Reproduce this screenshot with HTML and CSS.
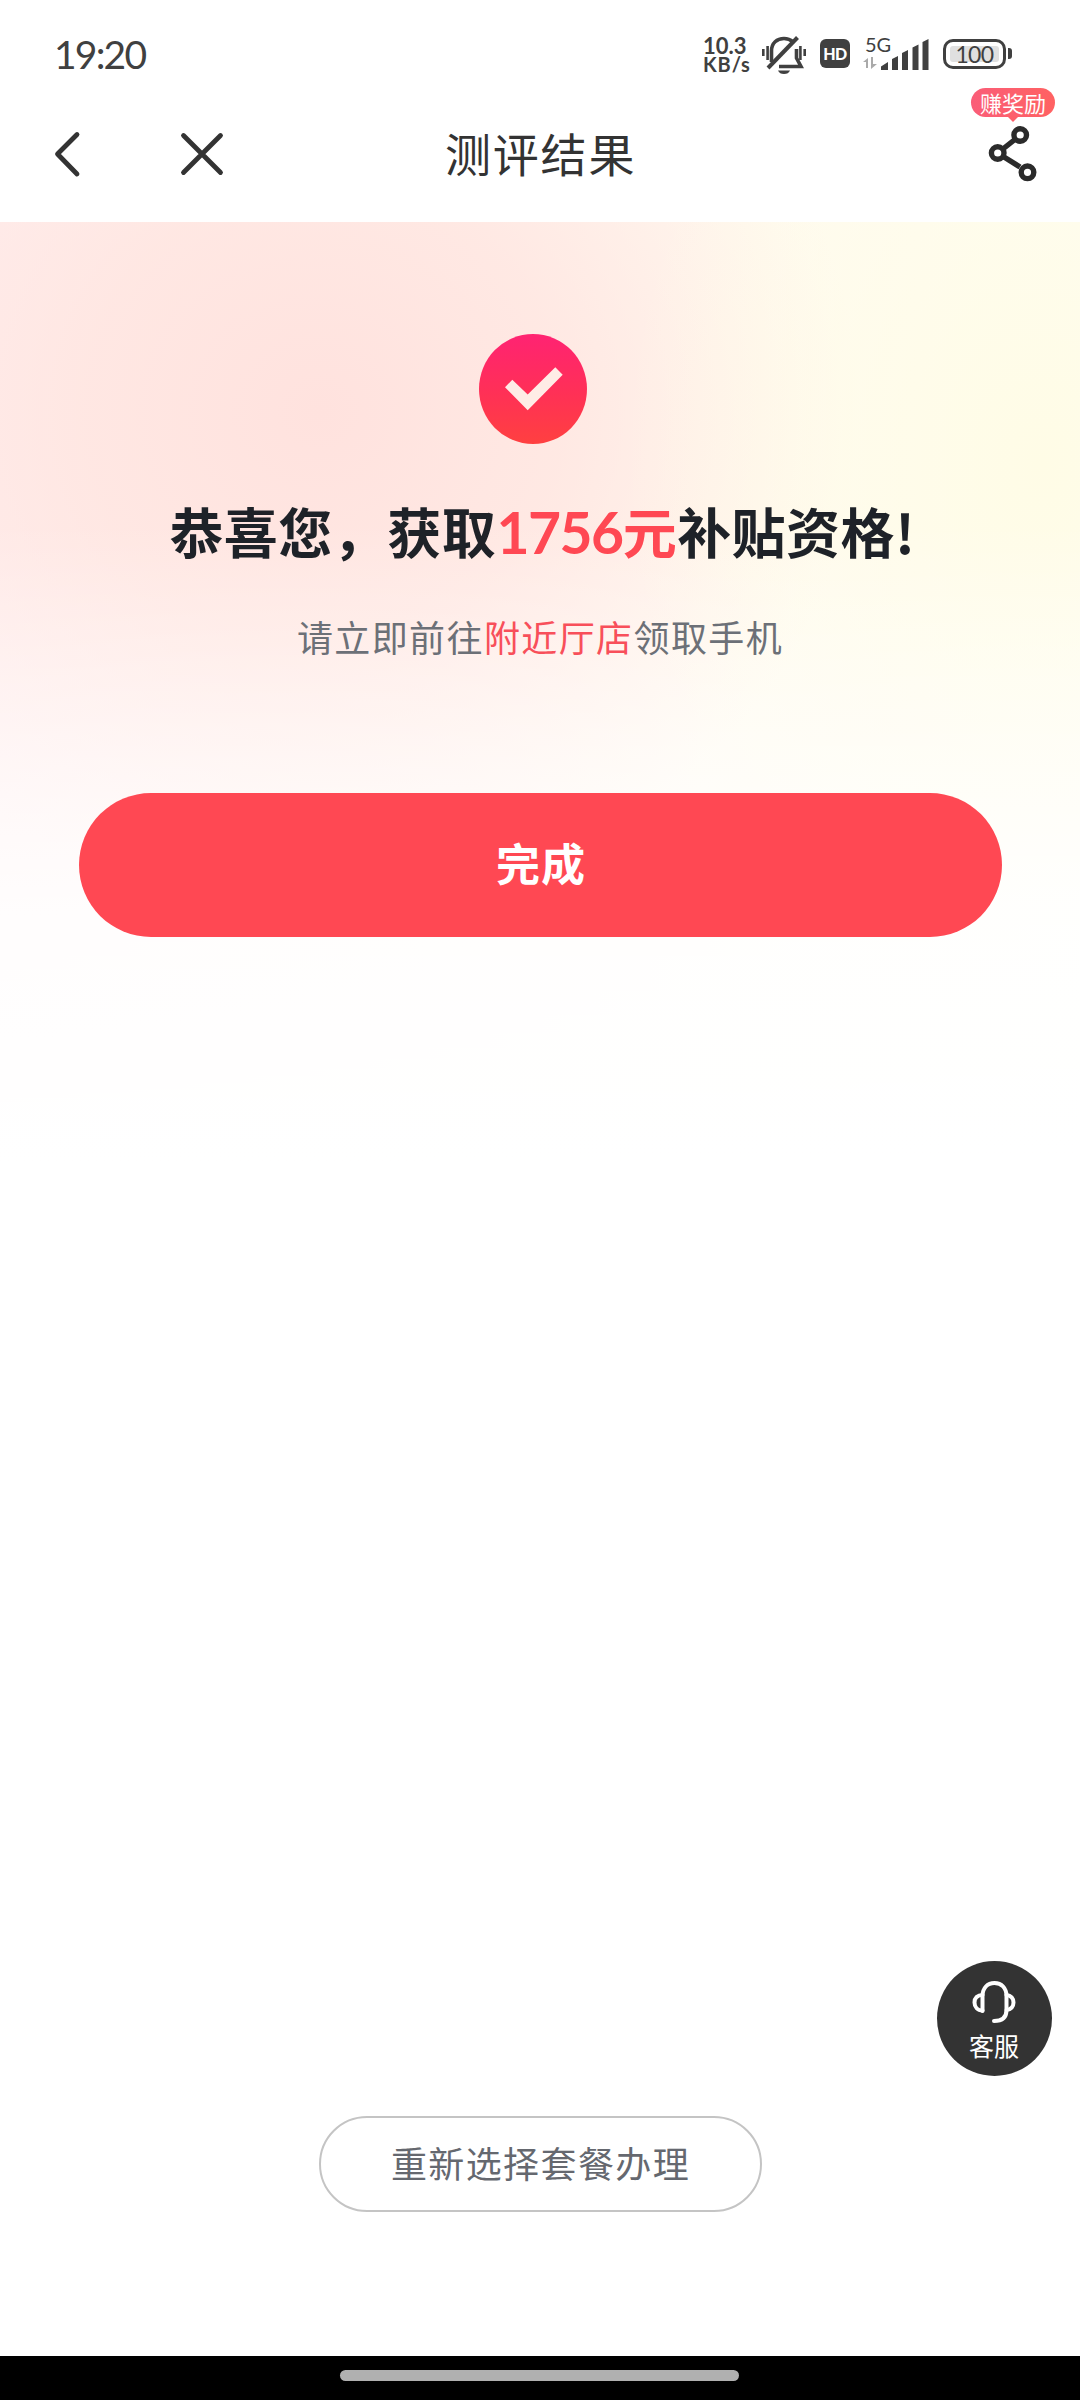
FILE: index.html
```html
<!DOCTYPE html>
<html lang="zh-CN">
<head>
<meta charset="utf-8">
<title>测评结果</title>
<link rel="stylesheet" href="styles.css">
</head>
<body>
<div class="screen">
  <header class="status-bar">
    <span class="clock">19:20</span>
    <div class="status-icons">
      <div class="net-speed"><span class="net-value">10.3</span><span class="net-unit">KB/s</span></div>
      <svg class="bell" width="46" height="40" viewBox="0 0 46 40" fill="none" stroke="#404040" stroke-width="3.6">
        <path d="M10.5 27V16C10.500 8 16 3.500 23 3.500C26.500 3.500 29.500 4.600 31.600 6.600M35.500 14V23L40 31.500H18"/>
        <path d="M7 33L36.500 2.500" stroke-width="4"/>
        <path d="M17 35.500H29C28 38 26 39 23 39S18 38 17 35.500Z" fill="#404040" stroke="none"/>
        <path d="M2.300 14V21M6.600 11V25M39.400 11V25M43.700 14V21" stroke-width="2.600"/>
      </svg>
      <span class="hd">HD</span>
      <div class="signal">
        <span class="gen">5G</span>
        <svg width="66" height="36" viewBox="0 0 66 36">
          <path d="M0 26L5 22V32H3V26ZM8 21H10V28H14L8 33Z" fill="#aaa"/>
          <path d="M18 34V30.500L25 26V34ZM29 34V23L35 20V34ZM39 34V17L45 14V34ZM49.500 34V11.500L55.500 8.500V34ZM59.500 34V6L65.500 3V34Z" fill="#404040"/>
        </svg>
      </div>
      <div class="battery"><span class="battery-level">100</span></div>
    </div>
  </header>

  <nav class="title-bar">
    <svg class="back" width="28" height="48" viewBox="0 0 28 48" fill="none" stroke="#333" stroke-width="4.800" stroke-linecap="round" stroke-linejoin="round"><path d="M23 4.500L3.500 24L23 44"/></svg>
    <svg class="close" width="44" height="44" viewBox="0 0 44 44" fill="none" stroke="#333" stroke-width="4.800" stroke-linecap="round"><path d="M3.500 3.500L40.500 40.500M40.500 3.500L3.500 40.500"/></svg>
    <h1 class="title">测评结果</h1>
    <div class="share">
      <svg width="50" height="58" viewBox="0 0 50 58" fill="none" stroke="#2b2b2b" stroke-width="5.400">
        <path d="M15.500 24.500L27.500 15M16 33L32 43"/>
        <circle cx="32.200" cy="11" r="6.300"/><circle cx="9.700" cy="29" r="6.300"/><circle cx="39.500" cy="48.300" r="6.300"/>
      </svg>
      <span class="badge">赚奖励</span>
    </div>
  </nav>

  <main class="result">
    <svg class="check" width="108" height="110" viewBox="0 0 108 110">
      <defs><linearGradient id="check-fill" x1="0" y1="0" x2="0" y2="1"><stop offset="0.05" stop-color="#ff2470"/><stop offset="0.5" stop-color="#ff2f58"/><stop offset="1" stop-color="#ff4040"/></linearGradient></defs>
      <ellipse cx="54" cy="55" rx="54" ry="55" fill="url(#check-fill)"/>
      <path d="M26 53.300L33.300 45.700L48.700 60.500L76.300 33.300L83.700 40.700L48.700 76.300Z" fill="#ffece6"/>
    </svg>
    <h2 class="headline">恭喜您，获取<em class="amount"><span class="digits">1756</span>元</em>补贴资格!</h2>
    <p class="hint">请立即前往<a class="stores">附近厅店</a>领取手机</p>
    <button class="done">完成</button>
    <button class="reselect">重新选择套餐办理</button>
  </main>

  <footer class="gesture-bar"><span class="gesture-pill"></span></footer>

  <button class="support">
    <svg width="44" height="44" viewBox="0 0 44 44" fill="none" stroke="#fff" stroke-width="4" stroke-linecap="round" stroke-linejoin="round">
      <path d="M10.500 31V16C10.500 8 15.500 3 22.500 3S34.500 8 34.500 16V30C34.500 37 30.500 41 22 41"/>
      <path d="M10.500 15C5.500 15 2.500 18 2.500 22.500S5.500 30.500 10.500 30.500M34.500 15C39 15.500 41.500 18.500 41.500 22.500S39 29.500 34.500 30"/>
    </svg>
    <span>客服</span>
  </button>
</div>
</body>
</html>
```
FILE: styles.css
```css
* { box-sizing: border-box; }

body {
  margin: 0;
  background: #fff;
  font-family: "Noto Sans CJK SC", sans-serif;
}

button {
  border: 0;
  padding: 0;
  font-family: inherit;
}

.screen {
  position: relative;
  display: flex;
  flex-direction: column;
  width: 1080px;
  height: 2400px;
}

/* Status bar */
.status-bar {
  display: flex;
  justify-content: space-between;
  height: 88px;
  padding: 34px 68px 0 54px;
  color: #404040;
  font-family: Lato, sans-serif;
}

.clock {
  font-size: 39px;
  letter-spacing: -1.8px;
  line-height: 40px;
}

.status-icons {
  display: flex;
  align-items: flex-start;
}

.net-speed {
  display: flex;
  flex-direction: column;
  width: 50px;
  margin: 2px 8px 0 0;
  font-size: 22px;
  font-weight: 700;
  line-height: 19px;
}

.net-unit {
  font-size: 20px;
  letter-spacing: 0.9px;
}

.bell { margin: 1px 13px 0 0; }

.hd {
  display: flex;
  align-items: center;
  justify-content: center;
  width: 30px;
  height: 29px;
  margin: 5px 13px 0 0;
  border-radius: 6px;
  background: #404040;
  color: #fff;
  font-size: 16px;
  font-weight: 900;
  letter-spacing: -0.5px;
}

.signal {
  position: relative;
  width: 66px;
  height: 36px;
  margin: 2px 14px 0 0;
}

.gen {
  position: absolute;
  top: -2px;
  left: 2px;
  font-size: 20px;
  line-height: 20px;
}

.battery {
  position: relative;
  width: 63px;
  height: 30px;
  margin: 5px 6px 0 0;
  padding: 4px;
  border: 3.5px solid #404040;
  border-radius: 10px;
}

.battery::after {
  content: "";
  position: absolute;
  top: 6px;
  right: -9px;
  width: 4px;
  height: 11px;
  border-radius: 0 3px 3px 0;
  background: #404040;
}

.battery-level {
  display: block;
  height: 16px;
  border-radius: 3px;
  background: #e0e0e0;
  font-size: 23px;
  letter-spacing: -0.6px;
  line-height: 16px;
  text-align: center;
}

/* Title bar */
.title-bar {
  display: grid;
  grid-template-columns: 28px 44px 1fr 50px;
  column-gap: 99px;
  align-items: start;
  height: 134px;
  padding: 36px 42px 0 54px;
}

.back { margin-top: 6px; }
.close { margin: 8px 0 0 -1px; }

.title {
  margin: 0;
  color: #333;
  font-size: 46px;
  font-weight: 400;
  letter-spacing: 1.8px;
  line-height: 56px;
  padding-left: 121px;
  white-space: nowrap;
}

.share {
  position: relative;
  width: 50px;
  height: 58px;
}

.badge {
  position: absolute;
  top: -36px;
  left: -17px;
  width: 84px;
  height: 29px;
  border-radius: 15px;
  background: linear-gradient(90deg, #fa5d78, #ff6262);
  color: #fff;
  font-size: 22px;
  line-height: 28px;
  text-align: center;
}

.badge::after {
  content: "";
  position: absolute;
  top: 28px;
  left: 36px;
  border: 6px solid transparent;
  border-top-color: #fd5f6a;
  border-bottom: 0;
}

/* Result */
.result {
  display: flex;
  flex: 1;
  flex-direction: column;
  align-items: center;
  padding: 112px 0 144px;
  background:
    linear-gradient(180deg, rgba(255, 255, 255, 0) 300px, rgba(255, 255, 255, 0.4) 480px, rgba(255, 255, 255, 0.88) 690px, #fff 940px),
    radial-gradient(ellipse 420px 560px at 1040px 240px, #fffce6, rgba(255, 252, 230, 0)),
    radial-gradient(ellipse 540px 500px at 320px 190px, #ffe2de, rgba(255, 229, 224, 0.8) 45%, rgba(255, 243, 235, 0)),
    linear-gradient(90deg, #ffeeee, #fff6f0 45%, #fffbf0 70%, #fffdf4);
}

.check { margin-left: -14px; }

.headline {
  margin: 47px 0 0;
  padding-left: 5px;
  color: #1e2228;
  font-size: 54px;
  font-weight: 700;
  letter-spacing: 0.5px;
  line-height: 80px;
  white-space: nowrap;
}

.amount {
  color: #ff4853;
  font-style: normal;
}

.digits {
  font-family: Lato, sans-serif;
  font-size: 57px;
  letter-spacing: -1.5px;
  line-height: 1;
}

.hint {
  margin: 40px 0 0;
  color: #6c7077;
  font-size: 36px;
  letter-spacing: 1.4px;
  line-height: 50px;
}

.stores { color: #f84f5a; }

.done {
  width: 923px;
  height: 144px;
  margin-top: 132px;
  padding: 0 0 6px 2px;
  border-radius: 72px;
  background: #ff4853;
  color: #fff;
  font-size: 44px;
  font-weight: 700;
  letter-spacing: 1px;
}

.reselect {
  width: 443px;
  height: 96px;
  margin-top: auto;
  padding: 0 0 5px 1px;
  border: 2px solid #c4c4c4;
  border-radius: 48px;
  background: #fff;
  color: #65686f;
  font-size: 36px;
  letter-spacing: 1.4px;
}

/* Floating customer service button */
.support {
  position: absolute;
  top: 1961px;
  left: 937px;
  display: flex;
  flex-direction: column;
  align-items: center;
  width: 115px;
  height: 115px;
  padding: 19px 1px 0 0;
  border-radius: 50%;
  background: #333;
  color: #fff;
  font-size: 25px;
  line-height: 42px;
}

/* System gesture bar */
.gesture-bar {
  height: 44px;
  padding-top: 14px;
  background: #000;
}

.gesture-pill {
  display: block;
  width: 399px;
  height: 11px;
  margin: 0 auto 0 340px;
  border-radius: 6px;
  background: #b0b0b0;
}
```
